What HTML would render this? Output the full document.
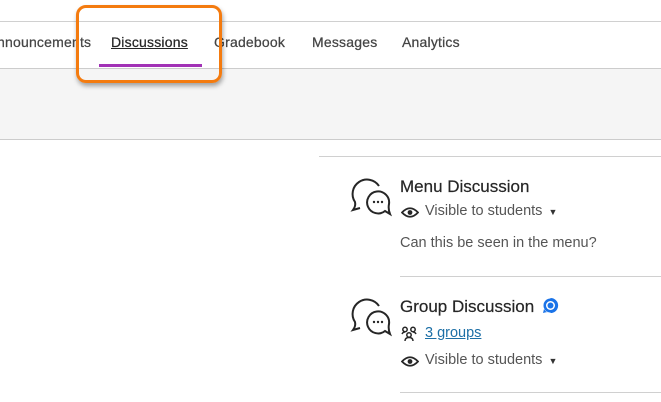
<!DOCTYPE html>
<html><head><meta charset="utf-8"><style>
body{margin:0;width:661px;height:402px;overflow:hidden;background:#fff;font-family:"Liberation Sans",sans-serif;position:relative}
.a{position:absolute}
.nav{font-size:14px;color:#444;top:34px;letter-spacing:0.2px;-webkit-text-stroke:0.25px #444}
.t{font-size:17px;color:#262626;-webkit-text-stroke:0.2px #262626}
.v{font-size:14.5px;color:#555}
</style></head><body>
<div class="a" style="left:0;top:21px;width:661px;height:1px;background:#d0d0d0"></div>
<div class="a" style="left:0;top:68px;width:661px;height:70px;background:#f5f5f5;border-top:1px solid #ccc;border-bottom:1px solid #ccc"></div>
<div class="a nav" style="left:-3px">nnouncements</div>
<div class="a nav" style="left:111px;color:#262626;text-decoration:underline;-webkit-text-stroke:0.25px #262626">Discussions</div>
<div class="a nav" style="left:214px">Gradebook</div>
<div class="a nav" style="left:312px">Messages</div>
<div class="a nav" style="left:402px">Analytics</div>
<div class="a" style="left:99px;top:64px;width:103px;height:3px;background:#a232b6"></div>
<div class="a" style="left:76px;top:5px;width:140px;height:72px;border:3px solid #f47b0f;border-radius:10px;box-shadow:1px 3px 5px rgba(0,0,0,.35)"></div>
<div class="a" style="left:319px;top:156px;width:342px;height:1px;background:#d0d0d0"></div>
<div class="a" style="left:400px;top:276px;width:261px;height:1px;background:#d0d0d0"></div>
<div class="a" style="left:400px;top:392px;width:261px;height:1px;background:#d0d0d0"></div>

<svg class="a" style="left:350px;top:174px" width="44" height="44" viewBox="0 0 44 44" fill="none" stroke="#262626" stroke-width="2">
<path d="M10 34 L3 36 Q6 32 5 28 A14 14 0 1 1 29 12"/>
<path d="M40 40 L35 37 A11 11 0 1 1 39 30 Q38 35 40 40Z"/>
<circle cx="24" cy="28" r="1.2" fill="#262626" stroke="none"/><circle cx="28" cy="28" r="1.2" fill="#262626" stroke="none"/><circle cx="32" cy="28" r="1.2" fill="#262626" stroke="none"/>
</svg>
<svg class="a" style="left:350px;top:294px" width="44" height="44" viewBox="0 0 44 44" fill="none" stroke="#262626" stroke-width="2">
<path d="M10 34 L3 36 Q6 32 5 28 A14 14 0 1 1 29 12"/>
<path d="M40 40 L35 37 A11 11 0 1 1 39 30 Q38 35 40 40Z"/>
<circle cx="24" cy="28" r="1.2" fill="#262626" stroke="none"/><circle cx="28" cy="28" r="1.2" fill="#262626" stroke="none"/><circle cx="32" cy="28" r="1.2" fill="#262626" stroke="none"/>
</svg>

<div class="a t" style="left:400px;top:177px">Menu Discussion</div>
<svg class="a" style="left:401px;top:206px" width="18" height="13" viewBox="0 0 18 13"><path d="M1 6.5 Q9 -2 17 6.5 Q9 15 1 6.5Z" fill="none" stroke="#262626" stroke-width="1.8"/><circle cx="9" cy="6.5" r="2.4" fill="#262626"/></svg>
<div class="a v" style="left:425px;top:203px">Visible to students <span style="font-size:9px;color:#333;margin-left:2px">▼</span></div>
<div class="a v" style="left:400px;top:235px">Can this be seen in the menu?</div>

<div class="a t" style="left:400px;top:297px">Group Discussion</div>
<svg class="a" style="left:542px;top:297px" width="17" height="17" viewBox="0 0 17 17"><path d="M8.5 1 A7.5 7.5 0 1 1 2 12 L1 16 L5 15 A7.5 7.5 0 0 0 8.5 16" fill="#1a73e8"/><circle cx="8.5" cy="8.5" r="7" fill="#1a73e8"/><circle cx="8.5" cy="8.5" r="4.5" fill="#fff"/><circle cx="8.5" cy="8.5" r="3" fill="#1a73e8"/></svg>
<svg class="a" style="left:401px;top:326px" width="16" height="16" viewBox="0 0 16 16" fill="none" stroke="#262626" stroke-width="1.5"><circle cx="4" cy="3.5" r="2.2"/><circle cx="12" cy="3.5" r="2.2"/><circle cx="8" cy="9" r="2.2"/><path d="M1 8 Q2 6 4 6 M15 8 Q14 6 12 6 M4 15 Q4 11.5 8 11.5 Q12 11.5 12 15"/></svg>
<div class="a v" style="left:425px;top:325px;color:#1c6fa6;text-decoration:underline">3 groups</div>
<svg class="a" style="left:401px;top:355px" width="18" height="13" viewBox="0 0 18 13"><path d="M1 6.5 Q9 -2 17 6.5 Q9 15 1 6.5Z" fill="none" stroke="#262626" stroke-width="1.8"/><circle cx="9" cy="6.5" r="2.4" fill="#262626"/></svg>
<div class="a v" style="left:425px;top:352px">Visible to students <span style="font-size:9px;color:#333;margin-left:2px">▼</span></div>
</body></html>
